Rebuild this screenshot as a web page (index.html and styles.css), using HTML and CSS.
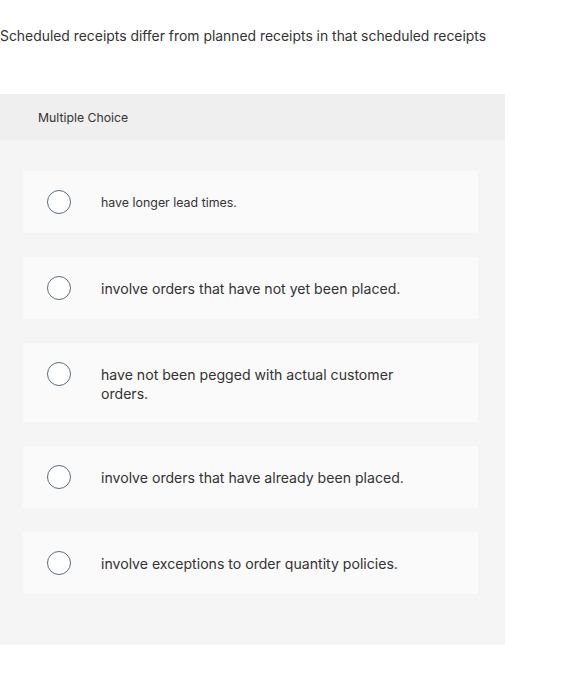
FILE: index.html
```html
<!DOCTYPE html>
<html>
<head>
<meta charset="utf-8">
<link rel="stylesheet" href="styles.css">
</head>
<body>
<p class="question">Scheduled receipts differ from planned receipts in that scheduled receipts</p>
<div class="panel">
  <div class="panel-head">Multiple Choice</div>
  <div class="panel-body">
    <div class="option"><span class="radio"></span><span class="label small">have longer lead times.</span></div>
    <div class="option"><span class="radio"></span><span class="label">involve orders that have not yet been placed.</span></div>
    <div class="option"><span class="radio"></span><span class="label">have not been pegged with actual customer<br>orders.</span></div>
    <div class="option"><span class="radio"></span><span class="label">involve orders that have already been placed.</span></div>
    <div class="option"><span class="radio"></span><span class="label">involve exceptions to order quantity policies.</span></div>
  </div>
</div>
</body>
</html>
```
FILE: styles.css
```css
html, body {
  margin: 0;
  padding: 0;
  background: #ffffff;
}
body {
  font-family: Inter, "Liberation Sans", sans-serif;
  color: #333333;
}
.question {
  margin: 0;
  padding: 26px 0 0 0;
  font-size: 13.9px;
  line-height: 20px;
  height: 68px;
  color: #333;
}
.panel {
  width: 505px;
  background: #f5f5f5;
}
.panel-head {
  height: 46px;
  display: flex;
  align-items: center;
  padding-left: 38px;
  background: #efefef;
  font-size: 12.25px;
  color: #333;
}
.panel-body {
  display: flex;
  flex-direction: column;
  gap: 24px;
  padding: 31px 27px 51px 23px;
}
.option {
  display: flex;
  align-items: flex-start;
  background: #fafafa;
  padding: 19px 0;
}
.radio {
  flex: none;
  width: 22px;
  height: 22px;
  margin: 0 0 0 24px;
  border: 1.5px solid #5b6b7b;
  border-radius: 50%;
  background: #fff;
}
.label {
  margin: 3px 0 0 30px;
  font-size: 14.1px;
  line-height: 19px;
  color: #333;
}
.label.small {
  font-size: 12.4px;
}
```
